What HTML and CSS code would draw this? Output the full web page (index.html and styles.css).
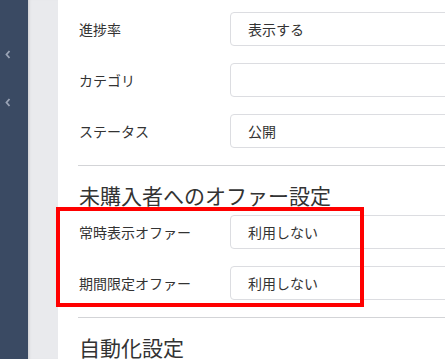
FILE: index.html
```html
<!DOCTYPE html>
<html lang="ja">
<head>
<meta charset="utf-8">
<link rel="stylesheet" href="styles.css">
</head>
<body>
<div class="app">
  <aside class="sidebar">
    <svg class="chev chev1" width="6" height="9" viewBox="0 0 6 9"><polyline points="4.5,1 1.5,4.5 4.5,8" fill="none" stroke="#9aa4b6" stroke-width="1.8"/></svg>
    <svg class="chev chev2" width="6" height="9" viewBox="0 0 6 9"><polyline points="4.5,1 1.5,4.5 4.5,8" fill="none" stroke="#9aa4b6" stroke-width="1.8"/></svg>
  </aside>
  <div class="gutter"></div>
  <main class="main">
    <div class="row"><div class="label">進捗率</div><div class="field">表示する</div></div>
    <div class="row"><div class="label">カテゴリ</div><div class="field"></div></div>
    <div class="row"><div class="label">ステータス</div><div class="field">公開</div></div>
    <hr class="divider">
    <h2 class="heading">未購入者へのオファー設定</h2>
    <div class="row"><div class="label">常時表示オファー</div><div class="field">利用しない</div></div>
    <div class="row"><div class="label">期間限定オファー</div><div class="field">利用しない</div></div>
    <hr class="divider">
    <h2 class="heading">自動化設定</h2>
  </main>
  <div class="highlight"></div>
</div>
</body>
</html>
```
FILE: styles.css
```css
html, body {
  margin: 0;
  padding: 0;
  height: 100%;
  overflow: hidden;
  background: #fff;
  font-family: "Noto Sans CJK JP", "Noto Sans", sans-serif;
  color: #333;
}
.app {
  position: relative;
  display: flex;
  height: 359px;
  width: 445px;
  overflow: hidden;
}
.sidebar {
  position: relative;
  width: 28px;
  flex: none;
  background: #3a4a63;
}
.chev {
  position: absolute;
  left: 5px;
}
.chev1 { top: 50px; }
.chev2 { top: 98px; }
.gutter {
  width: 30px;
  flex: none;
  background: #e9eaed;
  box-shadow: inset 3px 0 3px -2px rgba(0,0,0,0.12);
}
.main {
  flex: 1;
  padding: 12px 0 0 21px;
  min-width: 0;
}
.row {
  display: flex;
  align-items: center;
  height: 34px;
  margin-bottom: 17px;
}
.label {
  width: 151px;
  flex: none;
  font-size: 14px;
  color: #333;
}
.field {
  flex: none;
  width: 300px;
  height: 34px;
  box-sizing: border-box;
  border: 1px solid #dcdde1;
  border-radius: 4px;
  padding-left: 17px;
  display: flex;
  align-items: center;
  font-size: 14px;
  color: #333;
}
.divider {
  margin: 0 0 14px -1px;
  border: 0;
  border-top: 1px solid #d3d4d7;
  height: 0;
}
.heading {
  margin: 0 0 5px 0;
  font-size: 21px;
  font-weight: normal;
  line-height: 30px;
  height: 30px;
  color: #333;
  white-space: nowrap;
}
.highlight {
  position: absolute;
  left: 56px;
  top: 207px;
  width: 300px;
  height: 92px;
  border: 4px solid #ff0000;
}
```
